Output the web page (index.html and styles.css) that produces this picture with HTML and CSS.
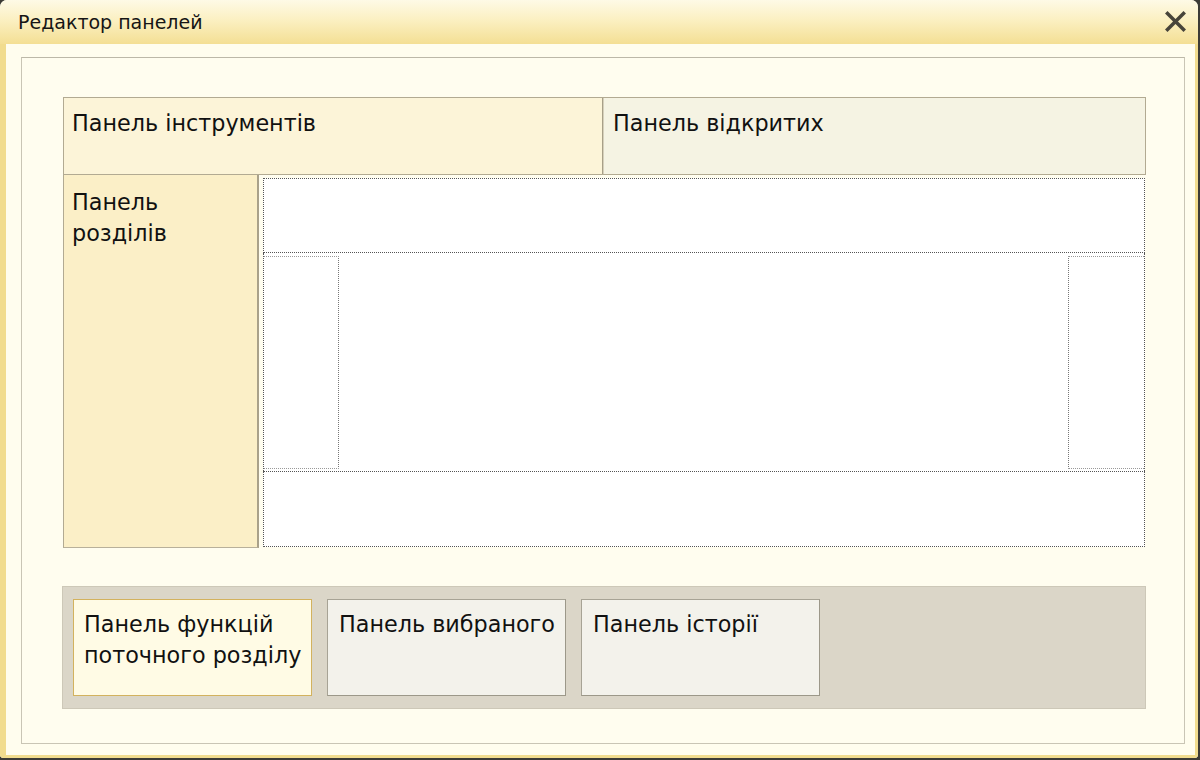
FILE: index.html
```html
<!DOCTYPE html>
<html lang="uk">
<head>
<meta charset="utf-8">
<title>Редактор панелей</title>
<link rel="stylesheet" href="styles.css">
</head>
<body>
<div class="window">
  <div class="titlebar">
    <span class="title">Редактор панелей</span>
    <span class="close" aria-label="close">
      <svg width="21" height="21" viewBox="0 0 21 21"><path d="M2.5 2.5 L18.5 18.5 M18.5 2.5 L2.5 18.5" stroke="#47443a" stroke-width="3.5" stroke-linecap="square" fill="none"/></svg>
    </span>
  </div>
  <div class="client">
    <div class="frame">
      <div class="top-row">
        <div class="panel tools">Панель інструментів</div>
        <div class="panel opened">Панель відкритих</div>
      </div>
      <div class="mid-row">
        <div class="panel sections">Панель<br>розділів</div>
        <div class="work">
          <div class="w-top"></div>
          <div class="w-mid">
            <div class="w-side left"></div>
            <div class="w-center"></div>
            <div class="w-side right"></div>
          </div>
          <div class="w-bot"></div>
        </div>
      </div>
      <div class="bottom-bar">
        <div class="btn active">Панель функцій<br>поточного розділу</div>
        <div class="btn">Панель вибраного</div>
        <div class="btn">Панель історії</div>
      </div>
    </div>
  </div>
</div>
</body>
</html>
```

FILE: styles.css
```css
html, body {
  margin: 0;
  padding: 0;
}
body {
  background: #3c3b36;
  width: 1200px;
  height: 760px;
  overflow: hidden;
  font-family: "DejaVu Sans", "Liberation Sans", sans-serif;
  color: #111;
}
.window {
  width: 1198px;
  height: 758px;
  display: flex;
  flex-direction: column;
  border-radius: 7px 7px 4px 4px;
  overflow: hidden;
  background: #fffdee;
}
.titlebar {
  height: 44px;
  flex: none;
  display: flex;
  align-items: center;
  justify-content: space-between;
  padding: 0 12px 0 18px;
  background: linear-gradient(#fefae6 0%, #fbf0c2 45%, #f4df94 100%);
  box-sizing: border-box;
}
.title {
  font-size: 19px;
  color: #151515;
  margin-top: -1px;
}
.close {
  display: flex;
  width: 21px;
  height: 21px;
  margin-top: -2px;
}
.client {
  flex: 1;
  border-left: 6px solid #f1dc8e;
  border-right: 3px solid #f1dc8e;
  border-bottom: 3px solid #f1dc8e;
  padding: 13px 10px 11px 15px;
  display: flex;
  background: #fffdee;
}
.frame {
  flex: 1;
  border: 1px solid #c9c5b5;
  border-top-color: #bcb8a8;
  padding: 39px 38px 0 41px;
  display: flex;
  flex-direction: column;
  background: #fffdef;
}
.panel {
  font-size: 22.3px;
  line-height: 31px;
  box-sizing: border-box;
}
.top-row {
  display: flex;
  height: 78px;
  border: 1px solid #b2aa92;
  box-sizing: border-box;
}
.tools {
  width: 539px;
  background: #fcf4d8;
  padding: 10px 0 0 8px;
  border-right: 1px solid #a79f88;
}
.opened {
  flex: 1;
  background: #f5f3e3;
  padding: 10px 0 0 9px;
  border-left: 1px solid #d6d0bb;
}
.mid-row {
  display: flex;
  height: 373px;
}
.sections {
  width: 196px;
  background: #fbefc7;
  border-left: 1px solid #b2aa92;
  border-right: 2px solid #a9a18a;
  border-bottom: 1px solid #b8b09a;
  padding: 12px 0 0 8px;
}
.work {
  margin: 3px 1px 1px 4px;
  flex: 1;
  display: flex;
  flex-direction: column;
  background: #fff;
}
.w-top {
  height: 75px;
  border: 1px dotted #555;
  box-sizing: border-box;
}
.w-mid {
  flex: 1;
  display: flex;
  border-left: 1px dotted #555;
  border-right: 1px dotted #555;
}
.w-side {
  width: 74px;
  margin: 3px 0 2px 0;
  border-top: 1px dotted #999;
  border-bottom: 1px dotted #999;
}
.w-side.left {
  border-right: 1px dotted #777;
}
.w-side.right {
  width: 75px;
  border-left: 1px dotted #777;
}
.w-center {
  flex: 1;
}
.w-bot {
  height: 76px;
  border: 1px dotted #555;
  box-sizing: border-box;
}
.bottom-bar {
  margin: 38px 0 0 -1px;
  height: 123px;
  box-sizing: border-box;
  background: #dbd6c8;
  border: 1px solid #cdc8b8;
  padding: 12px 0 0 10px;
  display: flex;
  gap: 15px;
}
.btn {
  width: 239px;
  height: 97px;
  box-sizing: border-box;
  background: #f3f2eb;
  border: 1px solid #a7a395;
  border-right-color: #9c9889;
  border-bottom-color: #9c9889;
  font-size: 22.3px;
  line-height: 31px;
  padding: 9px 0 0 11px;
}
.btn.active {
  background: #fffbe5;
  border: 1px solid #d3b25e;
  padding-left: 10px;
}
```
